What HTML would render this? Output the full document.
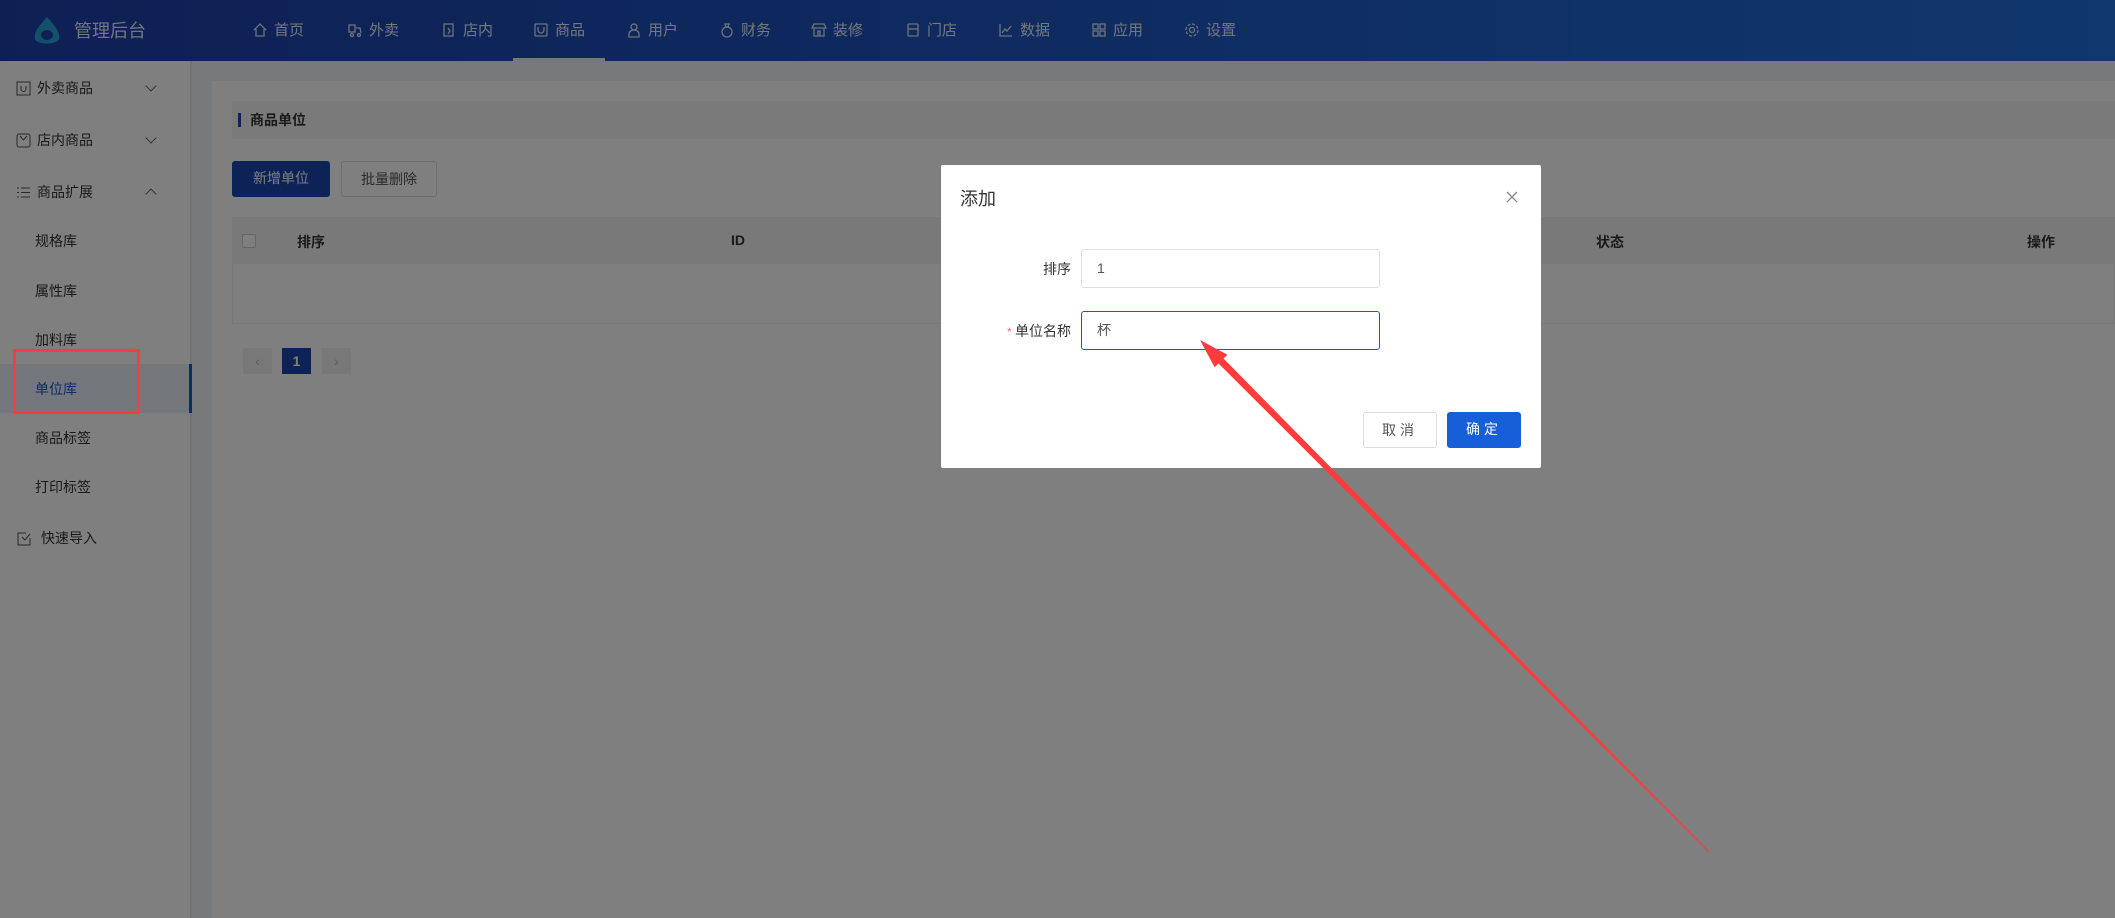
<!DOCTYPE html>
<html><head><meta charset="utf-8">
<style>
*{margin:0;padding:0;box-sizing:border-box}
body{width:2115px;height:918px;overflow:hidden;position:relative;font-family:"Liberation Sans","Noto Sans CJK SC",sans-serif;background:#f0f2f5;color:#333}
.hdr{position:absolute;left:0;top:0;width:2115px;height:61px;background:linear-gradient(90deg,#1c3fa8,#2070dc)}
.logo{position:absolute;left:30px;top:16px}
.logot{position:absolute;left:74px;top:17px;color:#e6ecf6;font-size:18px}
.nav{position:absolute;top:19px;color:#e9eef8;font-size:15px;display:flex;align-items:center;gap:6px}
.nav svg{width:16px;height:16px}
.uline{position:absolute;left:513px;top:58px;width:92px;height:3px;background:#eee}
.side{position:absolute;left:0;top:61px;width:192px;height:857px;background:#fff;border-right:2px solid #e6e6e6}
.si{position:absolute;font-size:14px;color:#333}
.sub{left:35px}
.act{position:absolute;left:0;top:303px;width:192px;height:49px;background:#e8f0fb;border-right:3px solid #1a56c9}
.chev{position:absolute;left:147px;width:8px;height:8px;border-right:1.5px solid #666;border-bottom:1.5px solid #666}
.card{position:absolute;left:212px;top:81px;width:1903px;height:837px;background:#fff}
.tbar{position:absolute;left:232px;top:101px;width:1883px;height:38px;background:#f5f5f5;font-size:14px;font-weight:bold;line-height:38px;padding-left:18px}
.tbar:before{content:"";position:absolute;left:6px;top:12px;width:3px;height:14px;background:#1a47b0}
.btn{position:absolute;top:161px;height:36px;font-size:14px;line-height:34px;text-align:center;border-radius:3px}
.th{position:absolute;left:232px;top:217px;width:1883px;height:47px;background:#f2f2f2;font-size:14px;font-weight:bold}
.th span{position:absolute;top:15px}
.tr{position:absolute;left:232px;top:264px;width:1883px;height:60px;border:1px solid #eee;border-top:none}
.pg{position:absolute;top:348px;width:29px;height:26px;background:#f0f0f0;font-size:14px;text-align:center;line-height:26px;color:#bbb}
.mask{position:absolute;left:0;top:0;width:2115px;height:918px;background:rgba(0,0,0,.5)}
.modal{position:absolute;left:941px;top:165px;width:600px;height:303px;background:#fff;border-radius:2px}
.mt{position:absolute;left:19px;top:20px;font-size:18px;color:#333}
.lbl{position:absolute;font-size:14px;color:#333;text-align:right;width:130px;left:0}
.inp{position:absolute;left:140px;width:299px;height:39px;border:1px solid #dcdfe6;border-radius:3px;font-size:14px;line-height:37px;padding-left:15px;color:#555}
.mb{position:absolute;top:247px;height:36px;width:74px;border-radius:3px;font-size:14px;text-align:center;line-height:34px;letter-spacing:4px}
</style></head><body>
<div class="hdr">
<svg class="logo" width="34" height="30" viewBox="0 0 34 30"><path d="M17 1 C11 8 3 16 5 23 C7 29 27 29 29 23 C31 16 23 8 17 1Z" fill="#2aa0d6"/><ellipse cx="17" cy="19" rx="6" ry="5" fill="#1c3fa8"/></svg>
<div class="logot">管理后台</div>
<div class="nav" style="left:252px"><svg viewBox="0 0 16 16" fill="none" stroke="#dfe6f3" stroke-width="1.3"><path d="M2 8 L8 2 L14 8 M4 7 V14 H12 V7"/></svg>首页</div>
<div class="nav" style="left:347px"><svg viewBox="0 0 16 16" fill="none" stroke="#dfe6f3" stroke-width="1.3"><rect x="2" y="3" width="6" height="7"/><circle cx="5" cy="13" r="1.5"/><circle cx="12" cy="13" r="1.5"/><path d="M9 6h4l1 5"/></svg>外卖</div>
<div class="nav" style="left:441px"><svg viewBox="0 0 16 16" fill="none" stroke="#dfe6f3" stroke-width="1.3"><rect x="3" y="2" width="9" height="12"/><path d="M7 6l2 3-2 3"/></svg>店内</div>
<div class="nav" style="left:533px"><svg viewBox="0 0 16 16" fill="none" stroke="#dfe6f3" stroke-width="1.3"><rect x="2" y="2" width="12" height="12" rx="1"/><path d="M5 5v3a3 3 0 0 0 6 0V5"/></svg>商品</div>
<div class="nav" style="left:626px"><svg viewBox="0 0 16 16" fill="none" stroke="#dfe6f3" stroke-width="1.3"><circle cx="8" cy="5" r="3"/><path d="M3 15v-3a5 4 0 0 1 10 0v3z"/></svg>用户</div>
<div class="nav" style="left:719px"><svg viewBox="0 0 16 16" fill="none" stroke="#dfe6f3" stroke-width="1.3"><circle cx="8" cy="10" r="5"/><path d="M6 2h4l-1 3H7z"/></svg>财务</div>
<div class="nav" style="left:811px"><svg viewBox="0 0 16 16" fill="none" stroke="#dfe6f3" stroke-width="1.3"><path d="M1 6l2-4h10l2 4zM3 6v8h10V6M7 14v-5h2v5"/></svg>装修</div>
<div class="nav" style="left:905px"><svg viewBox="0 0 16 16" fill="none" stroke="#dfe6f3" stroke-width="1.3"><rect x="3" y="2" width="10" height="12" rx="1"/><path d="M3 7h10"/></svg>门店</div>
<div class="nav" style="left:998px"><svg viewBox="0 0 16 16" fill="none" stroke="#dfe6f3" stroke-width="1.3"><path d="M2 2v12h12M4 11l3-4 2 2 4-5"/></svg>数据</div>
<div class="nav" style="left:1091px"><svg viewBox="0 0 16 16" fill="none" stroke="#dfe6f3" stroke-width="1.3"><rect x="2" y="2" width="5" height="5"/><rect x="9" y="2" width="5" height="5"/><rect x="2" y="9" width="5" height="5"/><rect x="9" y="9" width="5" height="5"/></svg>应用</div>
<div class="nav" style="left:1184px"><svg viewBox="0 0 16 16" fill="none" stroke="#dfe6f3" stroke-width="1.3"><circle cx="8" cy="8" r="2.5"/><circle cx="8" cy="8" r="6" stroke-dasharray="3 1.7"/></svg>设置</div>
<div class="uline"></div>
</div>
<div class="side">
<div class="act"></div>
</div>
<div class="si" style="left:16px;top:81px"><svg width="15" height="15" viewBox="0 0 15 15" fill="none" stroke="#555"><rect x="1" y="1" width="13" height="13"/><path d="M5 5v3a2.5 2.5 0 0 0 5 0V5"/></svg></div>
<div class="si" style="left:37px;top:78px">外卖商品</div><div class="chev" style="top:82px;transform:rotate(45deg)"></div>
<div class="si" style="left:16px;top:133px"><svg width="15" height="15" viewBox="0 0 15 15" fill="none" stroke="#555"><rect x="1" y="1" width="13" height="13" rx="2"/><path d="M4 3l3.5 4L11 3"/></svg></div>
<div class="si" style="left:37px;top:130px">店内商品</div><div class="chev" style="top:134px;transform:rotate(45deg)"></div>
<div class="si" style="left:16px;top:185px"><svg width="15" height="15" viewBox="0 0 15 15" fill="none" stroke="#555"><path d="M1 3h2M5 3h9M1 7.5h2M5 7.5h9M1 12h2M5 12h9"/></svg></div>
<div class="si" style="left:37px;top:182px">商品扩展</div><div class="chev" style="top:190px;transform:rotate(225deg)"></div>
<div class="si sub" style="top:231px">规格库</div>
<div class="si sub" style="top:281px">属性库</div>
<div class="si sub" style="top:330px">加料库</div>
<div class="si sub" style="top:379px;color:#1a56c9">单位库</div>
<div class="si sub" style="top:428px">商品标签</div>
<div class="si sub" style="top:477px">打印标签</div>
<div class="si" style="left:17px;top:532px"><svg width="14" height="14" viewBox="0 0 14 14" fill="none" stroke="#555"><path d="M9 1H1v12h12V6M5 5l3 3 5-6"/></svg></div>
<div class="si" style="left:41px;top:528px">快速导入</div>
<div class="card"></div>
<div class="tbar">商品单位</div>
<div class="btn" style="left:232px;width:98px;background:#1a47b0;color:#fff">新增单位</div>
<div class="btn" style="left:341px;width:96px;border:1px solid #ddd;color:#555">批量删除</div>
<div class="th"><span style="left:10px;top:17px;width:14px;height:14px;border:1px solid #ccc;background:#fff;border-radius:2px"></span><span style="left:65px">排序</span><span style="left:499px">ID</span><span style="left:1364px">状态</span><span style="left:1795px">操作</span></div>
<div class="tr"></div>
<div class="pg" style="left:243px">‹</div>
<div class="pg" style="left:282px;background:#1a47b0;color:#fff;font-weight:bold">1</div>
<div class="pg" style="left:322px">›</div>
<div class="mask"></div>
<div style="position:absolute;left:13px;top:349px;width:127px;height:65px;border:3px solid #ff3b3b"></div>
<div class="modal">
<div class="mt">添加</div>
<svg style="position:absolute;left:565px;top:26px" width="12" height="12" viewBox="0 0 12 12" stroke="#888" stroke-width="1.3"><path d="M1 1l10 10M11 1L1 11"/></svg>
<div class="lbl" style="top:94px">排序</div>
<div class="inp" style="top:84px">1</div>
<div class="lbl" style="top:156px"><span style="color:#f56c6c;font-size:12px">* </span>单位名称</div>
<div class="inp" style="top:146px;border-color:#1a56c9">杯</div>
<div class="mb" style="left:422px;border:1px solid #ddd;color:#555">取消</div>
<div class="mb" style="left:506px;background:#175fd9;color:#fff">确定</div>
</div>
<svg style="position:absolute;left:0;top:0" width="2115" height="918"><polygon points="1200,340 1227.4,354.7 1223.5,358.5 1709.4,851.6 1708.6,852.4 1218.5,363.5 1214.6,367.3" fill="#ff3b3b"/></svg>
</body></html>
